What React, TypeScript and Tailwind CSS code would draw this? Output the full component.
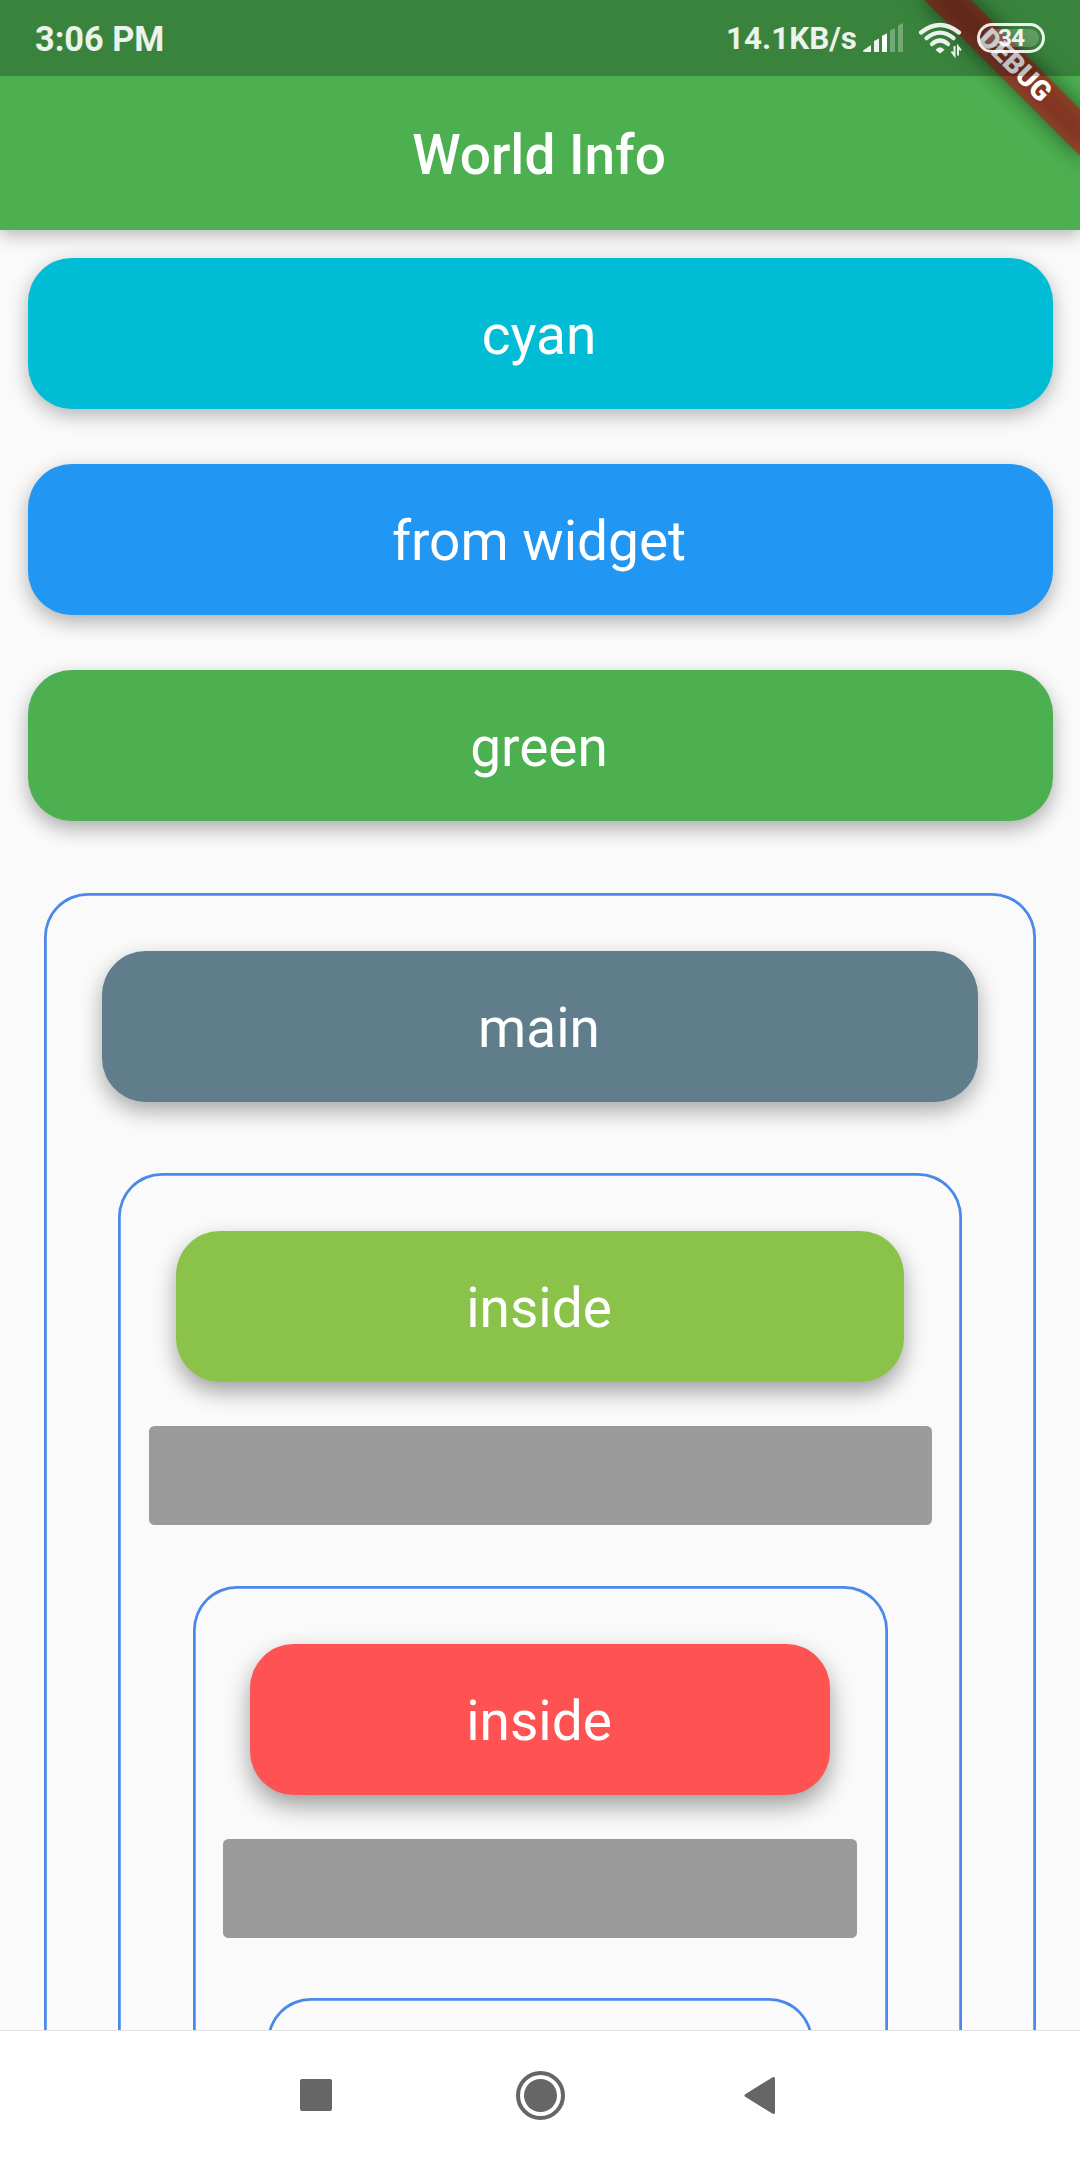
import type { ReactNode } from "react";

const shadows = [
  "shadow-[0_6px_20px_rgba(0,0,0,0.29)]",
  "shadow-[0_7px_20px_rgba(0,0,0,0.30)]",
  "shadow-[0_8px_20px_rgba(0,0,0,0.31)]",
  "shadow-[0_9px_22px_rgba(0,0,0,0.33)]",
  "shadow-[0_10px_22px_rgba(0,0,0,0.35)]",
  "shadow-[0_11px_24px_rgba(0,0,0,0.37)]",
];

function RoundButton({ label, color, depth }: { label: string; color: string; depth: number }) {
  return (
    <button
      className={`m-[27.5px] flex h-[151.25px] shrink-0 items-center justify-center rounded-[44px] pr-[2px] pt-1 text-[55px] leading-none text-white ${color} ${shadows[depth]}`}
    >
      {label}
    </button>
  );
}

function Frame({ children }: { children?: ReactNode }) {
  return (
    <section className="m-[44px] flex min-h-[300px] shrink-0 flex-col rounded-[44px] p-[30.25px] shadow-[inset_0_0_0_2.75px_#4a88ec]">
      {children}
    </section>
  );
}

function GreyBar() {
  return <div className="my-[16.5px] h-[99px] shrink-0 rounded-[5.5px] bg-[#9b9b9b]" />;
}

function StatusBar() {
  return (
    <div className="absolute inset-x-0 top-0 z-20 flex h-[76px] items-start bg-black/25 font-bold text-white/90">
      <span className="ml-[35px] mt-[21px] text-[34.3px] leading-9">3:06 PM</span>
      <span className="ml-auto mt-[21px] text-[31.4px] leading-9">14.1KB/s</span>
      <svg className="ml-[5px] mt-[20px]" width="42" height="36" viewBox="862 20 42 36" fill="currentColor">
        <path d="M863 50.500L871 45V52H864.500Q863 52 863 50.500Z" />
        <path d="M874 41L879 38.500V52H874Z" />
        <path d="M882 36L887 33.500V52H882Z" />
        <path opacity=".33" d="M890 30.500L895 28V52H890Z" />
        <path opacity=".33" d="M898 25.500L903 23V52H898Z" />
        <path d="M882 36L887 33.500V52H882Z" />
      </svg>
      <svg className="ml-[13px] mt-[20px]" width="46" height="38" viewBox="917 20 46 38" fill="none" stroke="currentColor" strokeWidth="4.2">
        <path strokeLinecap="round" d="M921 32.500Q940 17.500 959 32.500" />
        <path strokeLinecap="round" d="M926.500 38.200Q940 27 953.500 38.200" />
        <path strokeLinecap="round" d="M932 44Q940 37 948 44" />
        <path fill="currentColor" stroke="none" d="M935.500 50Q940 44.500 944.500 50L940 53.500Z" />
        <path strokeWidth="2" d="M954.500 46V55.500L951.500 51.500M958 55.500V46.500L961 50.500" />
      </svg>
      <div className="relative ml-[14px] mr-[35px] mt-[23px] flex h-[30px] w-[68px] items-center justify-center rounded-full border-[3px] border-current pt-px text-[24.5px] leading-none tracking-[-1px]">
        <div className="absolute inset-[3px] rounded-full bg-white/20" />
        <span className="relative">34</span>
      </div>
    </div>
  );
}

function DebugBanner() {
  return (
    <div className="pointer-events-none absolute right-0 top-0 z-10 size-[240px] overflow-hidden">
      <div className="absolute left-[63.900px] top-[49.600px] h-[33px] w-[220px] rotate-45">
        <div className="absolute inset-0 bg-black/50 blur-[10.9px]" />
        <div className="absolute inset-0 flex items-center justify-center bg-[#b71c1c]/63 pb-[3px] text-[28px] font-black leading-none text-white">
          DEBUG
        </div>
      </div>
    </div>
  );
}

export default function App() {
  return (
    <div className="relative flex h-[2160px] w-[1080px] flex-col overflow-hidden bg-[#fafafa] font-['Roboto',sans-serif]">
      <StatusBar />
      <DebugBanner />
      <header className="flex h-[230px] shrink-0 items-center justify-center bg-[#4caf50] pr-[2px] pt-[80px] text-[55px] font-medium leading-none text-white shadow-[0_4px_18px_rgba(0,0,0,0.30)]">
        World Info
      </header>
      <main className="flex min-h-0 flex-1 flex-col overflow-hidden">
        <RoundButton label="cyan" color="bg-[#00bcd4]" depth={0} />
        <RoundButton label="from widget" color="bg-[#2196f3]" depth={1} />
        <RoundButton label="green" color="bg-[#4caf50]" depth={2} />
        <Frame>
          <RoundButton label="main" color="bg-[#607d8b]" depth={3} />
          <Frame>
            <RoundButton label="inside" color="bg-[#8bc34a]" depth={4} />
            <GreyBar />
            <Frame>
              <RoundButton label="inside" color="bg-[#ff5252]" depth={5} />
              <GreyBar />
              <Frame />
            </Frame>
          </Frame>
        </Frame>
      </main>
      <nav className="flex h-[130px] shrink-0 items-start border-t border-[#e3e3e3] bg-white text-[#666]">
        <div className="ml-[300px] mt-[48px] size-8 rounded-[2px] bg-current" />
        <svg className="ml-[183px] mt-[39px]" width="51" height="51" viewBox="0 0 51 51">
          <circle cx="25.500" cy="25.500" r="22.500" fill="none" stroke="currentColor" strokeWidth="4" />
          <circle cx="25.500" cy="25.500" r="16.500" fill="currentColor" />
        </svg>
        <svg className="ml-[178px] mt-[45px]" width="32" height="39" viewBox="0 0 32 39" fill="currentColor" stroke="currentColor" strokeWidth="3" strokeLinejoin="round">
          <path d="M2 19.500L29.500 2.500V36.500Z" />
        </svg>
      </nav>
    </div>
  );
}
